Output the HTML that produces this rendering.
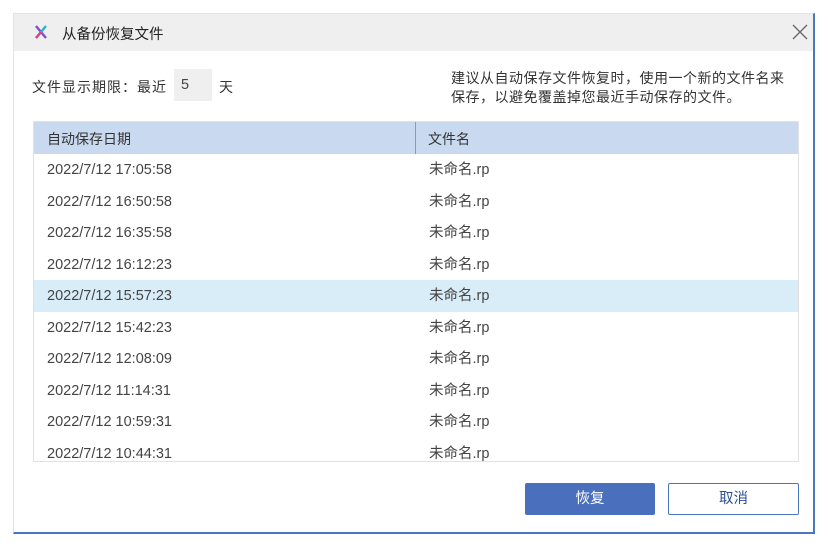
<!DOCTYPE html>
<html><head><meta charset="utf-8"><style>
body{margin:0;width:828px;height:544px;background:#fff;position:relative;overflow:hidden;font-family:"Liberation Sans","Noto Sans CJK SC",sans-serif;color:#333;}
.dlg{position:absolute;left:13px;top:13px;width:802px;height:521px;border:1px solid #dfe3ea;border-right:2px solid #4a78c0;border-bottom:2px solid #4a78c0;box-sizing:border-box;background:#fff}
.title{position:absolute;left:0;top:0;right:0;height:37px;background:#efefef}
.abs{position:absolute;white-space:nowrap}
.table{position:absolute;left:33px;top:121px;width:766px;height:341px;border:1px solid #e2e2e2;box-sizing:border-box;overflow:hidden}
.hdr{position:absolute;left:0;top:0;right:0;height:32px;background:#c9d9ef;font-size:14px}
.row{position:absolute;left:0;right:0;height:31.5px;font-size:14.5px;color:#444}
.row span{position:absolute;top:1px;line-height:31px}
</style></head><body>
<div class="dlg">
<div class="title"></div>
</div>
<svg class="abs" style="left:33px;top:24px" width="16" height="16" viewBox="0 0 16 16"><path d="M3 2 L13 14" stroke="#7a4fd0" stroke-width="2.4"/><path d="M13 2 L3 14" stroke="#2db0c8" stroke-width="2.4"/><path d="M8 8 L3 14" stroke="#e0408a" stroke-width="2.4"/></svg>
<div class="abs" style="left:62px;top:23px;font-size:14.5px;color:#222">从备份恢复文件</div>
<svg class="abs" style="left:792px;top:24px" width="16" height="16"><path d="M1 1L15 15M15 1L1 15" stroke="#666" stroke-width="1.3"/></svg>
<div class="abs" style="left:32px;top:77px;font-size:14px;letter-spacing:1px;color:#333">文件显示期限：最近</div>
<div class="abs" style="left:174px;top:69px;width:38px;height:32px;background:#efefef;font-size:14.5px;line-height:32px;text-indent:7px;color:#444">5</div>
<div class="abs" style="left:219px;top:77px;font-size:14px">天</div>
<div class="abs" style="left:451px;top:69px;font-size:14px;letter-spacing:0.5px;line-height:19px;color:#333">建议从自动保存文件恢复时，使用一个新的文件名来<br>保存，以避免覆盖掉您最近手动保存的文件。</div>
<div class="table">
<div class="hdr"><span class="abs" style="left:13px;top:7px">自动保存日期</span><div class="abs" style="left:381px;top:0;width:1px;height:32px;background:#999"></div><span class="abs" style="left:394px;top:7px">文件名</span></div>
<div class="row" style="top:32px"><span style="left:13px">2022/7/12 17:05:58</span><span style="left:395px">未命名.rp</span></div>
<div class="row" style="top:63.5px"><span style="left:13px">2022/7/12 16:50:58</span><span style="left:395px">未命名.rp</span></div>
<div class="row" style="top:95px"><span style="left:13px">2022/7/12 16:35:58</span><span style="left:395px">未命名.rp</span></div>
<div class="row" style="top:126.5px"><span style="left:13px">2022/7/12 16:12:23</span><span style="left:395px">未命名.rp</span></div>
<div class="row" style="top:158px;background:#d8edf8"><span style="left:13px">2022/7/12 15:57:23</span><span style="left:395px">未命名.rp</span></div>
<div class="row" style="top:189.5px"><span style="left:13px">2022/7/12 15:42:23</span><span style="left:395px">未命名.rp</span></div>
<div class="row" style="top:221px"><span style="left:13px">2022/7/12 12:08:09</span><span style="left:395px">未命名.rp</span></div>
<div class="row" style="top:252.5px"><span style="left:13px">2022/7/12 11:14:31</span><span style="left:395px">未命名.rp</span></div>
<div class="row" style="top:284px"><span style="left:13px">2022/7/12 10:59:31</span><span style="left:395px">未命名.rp</span></div>
<div class="row" style="top:315.5px"><span style="left:13px">2022/7/12 10:44:31</span><span style="left:395px">未命名.rp</span></div>
</div>
<div class="abs" style="left:525px;top:483px;width:130px;height:32px;background:#4a6fbd;border-radius:2px;color:#fff;font-size:14.5px;line-height:32px;text-align:center">恢复</div>
<div class="abs" style="left:668px;top:483px;width:131px;height:32px;border:1px solid #4a78c0;box-sizing:border-box;border-radius:2px;color:#2a4f9a;font-size:14.5px;line-height:30px;text-align:center">取消</div>
</body></html>
